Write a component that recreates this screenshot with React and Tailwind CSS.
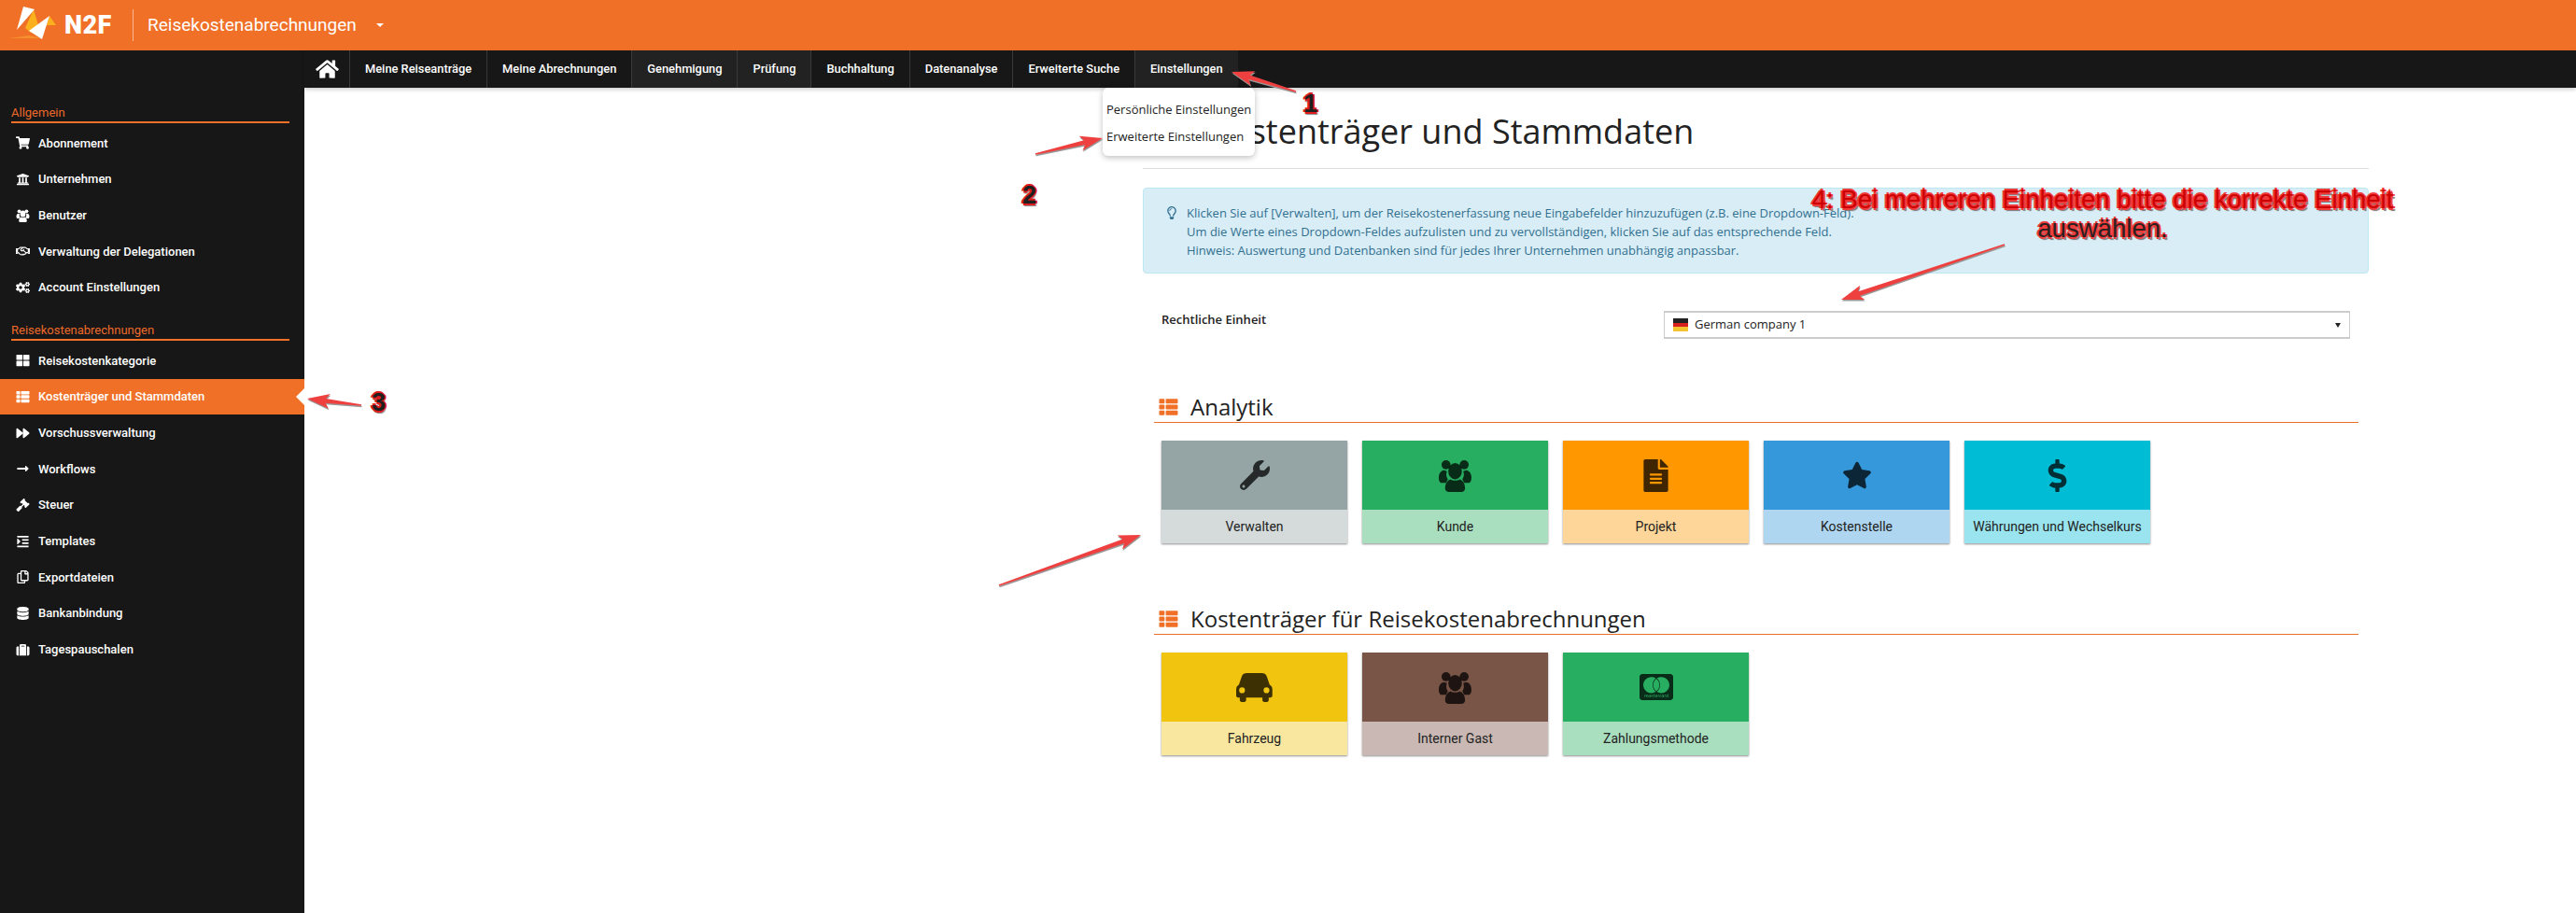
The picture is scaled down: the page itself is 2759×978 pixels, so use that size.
import React from 'react'
import {
  FaHome, FaShoppingCart, FaUniversity, FaRegHandshake, FaCogs, FaThLarge, FaThList,
  FaForward, FaLongArrowAltRight, FaGavel, FaIndent, FaRegCopy, FaDatabase, FaSuitcase,
  FaWrench, FaFileAlt, FaStar, FaDollarSign, FaCcMastercard, FaRegLightbulb,
} from 'react-icons/fa'

const NAV = [
  { label: 'Meine Reiseanträge' },
  { label: 'Meine Abrechnungen' },
  { label: 'Genehmigung', lit: true },
  { label: 'Prüfung', lit: true },
  { label: 'Buchhaltung' },
  { label: 'Datenanalyse' },
  { label: 'Erweiterte Suche' },
  { label: 'Einstellungen', lit: true },
]

// the big three-person glyph on the tiles and in the sidebar
function People({ className }) {
  return (
    <svg viewBox="0 0 38 36" className={className} fill="currentColor">
      <circle cx="9" cy="6" r="5" />
      <circle cx="29" cy="6" r="5" />
      <path d="M1 20c0-5 3-8 6-8l3 1c-1 3-1 6 1 9l-2 4H4c-2 0-3-3-3-6zM37 20c0-5-3-8-6-8l-3 1c1 3 1 6-1 9l2 4h5c2 0 3-3 3-6z" />
      <ellipse cx="19" cy="13" rx="7.5" ry="9" />
      <path d="M8 32c0-6 3-9 6-10 3 2 7 2 10 0 3 1 6 4 6 10 0 3-2 4-4 4H12c-2 0-4-1-4-4z" />
    </svg>
  )
}

// front view car, the headlights show the tile colour
function Car({ className }) {
  return (
    <svg viewBox="0 0 40 32" className={className} fill="currentColor">
      <path d="M3 13 6 4C7 1 9 0 12 0h16c3 0 5 1 6 4l3 9c2 1 3 3 3 5v7c0 1-1 2-2 2h-2v3c0 1-1 2-2 2h-3c-1 0-2-1-2-2v-3H11v3c0 1-1 2-2 2H6c-1 0-2-1-2-2v-3H2c-1 0-2-1-2-2v-7c0-2 1-4 3-5z" />
      <circle cx="6.5" cy="19" r="3.2" fill="#f1c40f" />
      <circle cx="33.5" cy="19" r="3.2" fill="#f1c40f" />
    </svg>
  )
}

const GENERAL = [
  { label: 'Abonnement', Icon: FaShoppingCart },
  { label: 'Unternehmen', Icon: FaUniversity },
  { label: 'Benutzer', Icon: People },
  { label: 'Verwaltung der Delegationen', Icon: FaRegHandshake },
  { label: 'Account Einstellungen', Icon: FaCogs },
]

const EXPENSES = [
  { label: 'Reisekostenkategorie', Icon: FaThLarge },
  { label: 'Kostenträger und Stammdaten', Icon: FaThList, active: true },
  { label: 'Vorschussverwaltung', Icon: FaForward },
  { label: 'Workflows', Icon: FaLongArrowAltRight },
  { label: 'Steuer', Icon: FaGavel },
  { label: 'Templates', Icon: FaIndent },
  { label: 'Exportdateien', Icon: FaRegCopy },
  { label: 'Bankanbindung', Icon: FaDatabase },
  { label: 'Tagespauschalen', Icon: FaSuitcase },
]

const ANALYTICS = [
  { label: 'Verwalten', Icon: FaWrench, top: 'bg-[#95a5a6]', bottom: 'bg-[#d5dbdb]', x: 'h-[32px]' },
  { label: 'Kunde', Icon: People, top: 'bg-[#27ae60]', bottom: 'bg-[#a9dfbf]', x: 'h-[35px]' },
  { label: 'Projekt', Icon: FaFileAlt, top: 'bg-[#ff9800]', bottom: 'bg-[#ffd699]', x: 'h-[35px]' },
  { label: 'Kostenstelle', Icon: FaStar, top: 'bg-[#3498db]', bottom: 'bg-[#aed6f1]', x: 'h-[32px]' },
  { label: 'Währungen und Wechselkurs', Icon: FaDollarSign, top: 'bg-[#00bcd4]', bottom: 'bg-[#99e4ee]', x: 'h-[35px]' },
]

const COST_OBJECTS = [
  { label: 'Fahrzeug', Icon: Car, top: 'bg-[#f1c40f]', bottom: 'bg-[#f9e79f]', x: 'h-[31px]' },
  { label: 'Interner Gast', Icon: People, top: 'bg-[#795548]', bottom: 'bg-[#c9b8b3]', x: 'h-[35px]' },
  { label: 'Zahlungsmethode', Icon: FaCcMastercard, top: 'bg-[#27ae60]', bottom: 'bg-[#a9dfbf]', x: 'h-[36px]' },
]

function Logo() {
  return (
    <div className="relative flex items-center w-[142px] h-full">
      <svg viewBox="0 0 120 54" className="absolute left-0 top-0 w-[120px] h-[54px]">
        <polygon points="10,41 31,38 44,41" fill="#f58f2e" />
        <polygon points="36,10 41,27 33,35 27,30" fill="#fbb01e" />
        <polygon points="53,17 60,27 50,27" fill="#fbb01e" />
        <polygon points="25,7 37,10 18,32" fill="#fff" />
        <polygon points="53,17 45,42 31,33" fill="#fff" />
      </svg>
      <span className="relative ml-[69px] text-[27px] leading-none font-black text-white font-['Roboto',sans-serif] tracking-[0.5px]">N2F</span>
    </div>
  )
}

function SideSection({ title, items, className }) {
  return (
    <div className={className}>
      <div className="ml-3 mr-4 h-[25px] pt-[5px] box-border border-b-2 border-[#f07027] text-[13px] leading-[17px] text-[#ee6a2a]">{title}</div>
      <ul className="mt-[2px]">
        {items.map(({ label, Icon, active }) => (
          <li key={label} className={`relative flex items-center h-[38.7px] pl-[17px] text-[13px] font-medium text-white ${active ? 'bg-[#f07027]' : ''}`}>
            <span className="flex justify-center w-[15px] mr-[9px]"><Icon className="w-[15px] h-[14px]" /></span>
            {label}
            {active && <span className="absolute right-0 top-[10px] border-y-[9px] border-r-[9px] border-y-transparent border-r-white" />}
          </li>
        ))}
      </ul>
    </div>
  )
}

function Tile({ label, Icon, top, bottom, x }) {
  return (
    <div className="w-[199px] h-[110px] flex flex-col shadow-[0_1px_2px_rgba(0,0,0,0.45)]">
      <div className={`h-[74px] flex items-center justify-center ${top}`}>
        <Icon className={`${x} w-auto text-black/75`} />
      </div>
      <div className={`flex-1 flex items-center justify-center text-[14px] text-[#222] ${bottom}`}>{label}</div>
    </div>
  )
}

function Section({ title, tiles, className }) {
  return (
    <section className={className}>
      <div className="flex items-center h-[28px] ml-[12px] border-b border-[#e8702a] pl-[3px] pb-[5px] w-[1290px] box-border">
        <FaThList className="w-[25px] h-[20px] text-[#f07027]" />
        <h2 className="ml-[11px] text-[24px] leading-none text-[#222] font-['Open_Sans',sans-serif]">{title}</h2>
      </div>
      <div className="flex gap-4 mt-[19px] ml-[20px]">
        {tiles.map(t => <Tile key={t.label} {...t} />)}
      </div>
    </section>
  )
}

// tapered annotation arrow, tail to tip
function arrowPoints(x1, y1, x2, y2) {
  const len = Math.hypot(x2 - x1, y2 - y1)
  const ux = (x2 - x1) / len
  const uy = (y2 - y1) / len
  const nx = -uy
  const ny = ux
  const at = (along, side) => `${(x1 + ux * along + nx * side).toFixed(1)},${(y1 + uy * along + ny * side).toFixed(1)}`
  const neck = len - 20
  return [at(0, 0.8), at(neck, 2.4), at(neck - 4, 8), at(len, 0), at(neck - 4, -8), at(neck, -2.4), at(0, -0.8)].join(' ')
}

const ARROWS = [
  [1388, 98, 1319, 77],
  [1109, 165, 1181, 148],
  [387, 434, 329, 427],
  [2147, 262, 1972, 321],
  [1070, 627, 1222, 573],
]

const NUMBERS = [
  { n: '1', cls: 'left-[1396px] top-[93px]' },
  { n: '2', cls: 'left-[1095px] top-[191px]' },
  { n: '3', cls: 'left-[398px] top-[413px]' },
]

function Annotations() {
  const numShadow = "[text-shadow:2px_0_0_#e01b1b,-2px_0_0_#e01b1b,0_-2px_0_#e01b1b,0_2px_0_#e01b1b,1px_3px_1px_#888]"
  const redShadow = "[text-shadow:2px_0_0_#f03a3a,-2px_0_0_#f03a3a,0_-2px_0_#f03a3a,0_2px_0_#f03a3a,2px_3px_1px_#777]"
  return (
    <>
      <svg className="absolute left-0 top-0 w-[2759px] h-[978px] pointer-events-none" viewBox="0 0 2759 978">
        {ARROWS.map(a => <polygon key={a[0]} points={arrowPoints(...a)} fill="#999" transform="translate(0.5 1.5)" />)}
        {ARROWS.map(a => <polygon key={a[0]} points={arrowPoints(...a)} fill="#ef4040" />)}
      </svg>
      {NUMBERS.map(({ n, cls }) => (
        <span key={n} className={`absolute ${cls} text-[27px] leading-[36px] font-bold text-[#1f1f1f] font-['Liberation_Sans',sans-serif] ${numShadow}`}>{n}</span>
      ))}
      <div className={`absolute left-[1900px] top-[198px] w-[704px] text-center text-[27.6px] leading-[31px] font-['Liberation_Sans',sans-serif] ${redShadow}`}>
        <div className="text-[#cc0000]">4: Bei mehreren Einheiten bitte die korrekte Einheit</div>
        <div className="text-[#2a2020]">auswählen.</div>
      </div>
    </>
  )
}

export default function App() {
  return (
    <div className="relative w-[2759px] h-[978px] overflow-hidden flex flex-col bg-white font-['Roboto',sans-serif]">
      {/* Top bar */}
      <header className="h-[54px] shrink-0 flex items-center bg-[#f07027] text-white">
        <Logo />
        <div className="w-px h-[34px] bg-white/50" />
        <span className="ml-[15px] text-[19px]">Reisekostenabrechnungen</span>
        <span className="ml-[21px] border-x-[4px] border-t-[4px] border-x-transparent border-t-white" />
      </header>

      <div className="flex-1 flex min-h-0">
        {/* Sidebar */}
        <aside className="w-[326px] shrink-0 bg-[#171717] pt-[53px]">
          <SideSection title="Allgemein" items={GENERAL} />
          <SideSection title="Reisekostenabrechnungen" items={EXPENSES} className="mt-[12.5px]" />
        </aside>

        <div className="flex-1 flex flex-col min-w-0">
          {/* Main menu */}
          <nav className="h-[40px] shrink-0 flex items-stretch bg-[#171717] text-white text-[12.85px] font-medium shadow-[0_2px_4px_rgba(0,0,0,0.2)]">
            <div className="flex items-center pl-[12px] w-[49px] border-r border-[#3a3a3a]"><FaHome className="w-[25px] h-[22px]" /></div>
            {NAV.map((item, i) => (
              <div key={item.label} className={`flex items-center px-[16px] ${i < NAV.length - 1 ? 'border-r border-[#3a3a3a]' : ''} ${item.lit ? 'bg-[#222]' : ''}`}>{item.label}</div>
            ))}
          </nav>

          {/* Page */}
          <main className="flex-1 pl-[898px] pr-[222px] relative">
            <h1 className="mt-[23px] h-[63px] pl-[71px] border-b border-[#ddd] box-content text-[36px] leading-[48px] text-[#222] font-['Open_Sans',sans-serif]">Kostenträger und Stammdaten</h1>

            <div className="mt-[20px] h-[92px] flex items-start pt-[16px] pl-[24px] rounded border border-[#bce8f1] bg-[#d9edf7] text-[13px] leading-[20px] text-[#31708f] font-['Open_Sans',sans-serif]">
              <FaRegLightbulb className="w-[12px] h-[14px] mt-[3px] mr-[10px] shrink-0" />
              <p>
                Klicken Sie auf [Verwalten], um der Reisekostenerfassung neue Eingabefelder hinzuzufügen (z.B. eine Dropdown-Feld).<br />
                Um die Werte eines Dropdown-Feldes aufzulisten und zu vervollständigen, klicken Sie auf das entsprechende Feld.<br />
                Hinweis: Auswertung und Datenbanken sind für jedes Ihrer Unternehmen unabhängig anpassbar.
              </p>
            </div>

            <div className="mt-[40px] flex items-start h-[30px] pl-[20px] pr-[20px] justify-between font-['Open_Sans',sans-serif] text-[13px] text-[#222]">
              <label className="font-semibold">Rechtliche Einheit</label>
              <div className="w-[735px] h-[30px] flex items-center px-[9px] border border-[#ccc] border-b-2 border-t-2 bg-white">
                <span className="flex flex-col w-[16px] h-[14px] mr-[7px] shrink-0">
                  <span className="flex-1 bg-[#222]" />
                  <span className="flex-1 bg-[#d8201c]" />
                  <span className="flex-1 bg-[#f4c430]" />
                </span>
                German company 1
                <span className="ml-auto border-x-[3.5px] border-t-[5px] border-x-transparent border-t-[#222]" />
              </div>
            </div>

            <Section title="Analytik" tiles={ANALYTICS} className="mt-[62px]" />
            <Section title="Kostenträger für Reisekostenabrechnungen" tiles={COST_OBJECTS} className="mt-[70px]" />
          </main>
        </div>
      </div>

      {/* Open menu under Einstellungen */}
      <div className="absolute left-[1181px] top-[94px] w-[163px] h-[73px] rounded-md bg-white shadow-[0_2px_6px_rgba(0,0,0,0.25)] text-[13px] text-[#222] font-['Open_Sans',sans-serif] pl-[4px] pt-[14px]">
        <div className="h-[29px] leading-[18px]">Persönliche Einstellungen</div>
        <div className="leading-[18px]">Erweiterte Einstellungen</div>
      </div>

      <Annotations />
    </div>
  )
}
